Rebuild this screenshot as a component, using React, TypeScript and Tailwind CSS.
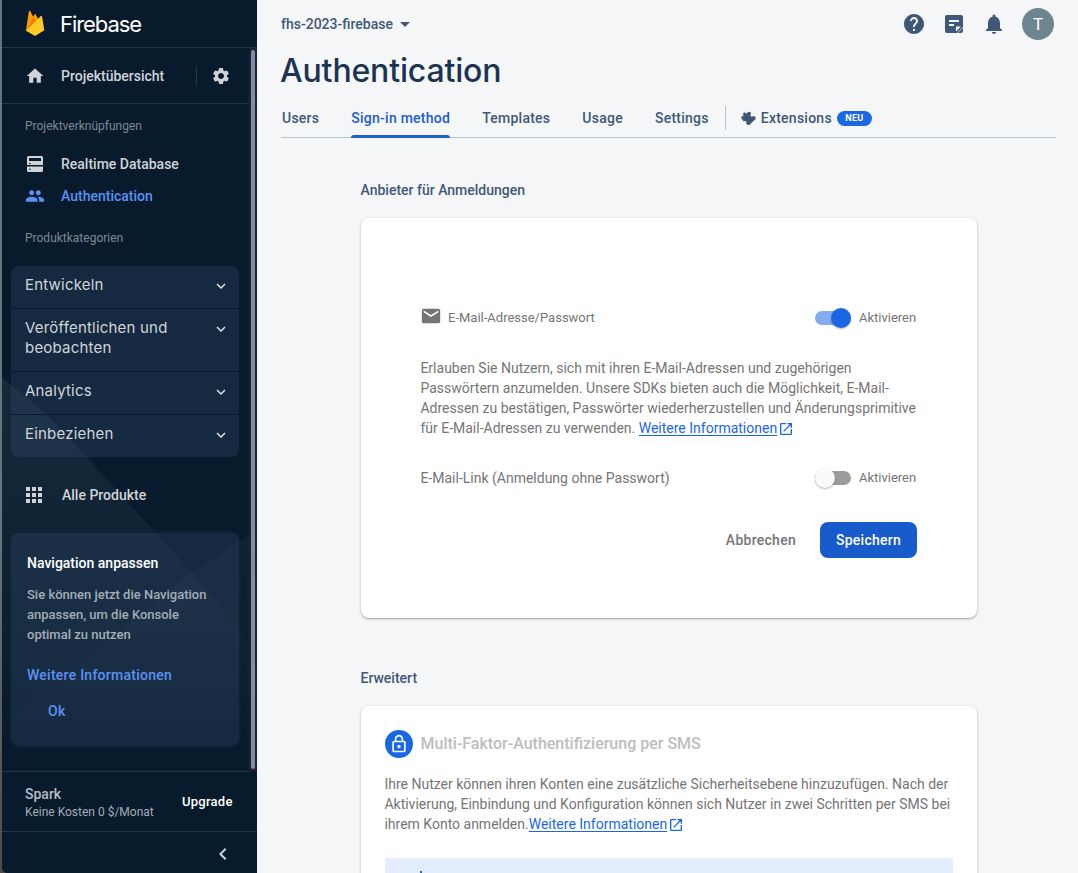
import React from "react";
import {
  MdHome,
  MdSettings,
  MdPeople,
  MdApps,
  MdExpandMore,
  MdHelp,
  MdNotifications,
  MdEmail,
  MdOpenInNew,
  MdChevronLeft,
  MdArrowDropDown,
  MdLockOutline,
} from "react-icons/md";

const roboto = "font-[Roboto,sans-serif]";
const display = "font-[Inter,sans-serif]";

function FirebaseLogo() {
  return (
    <svg width="20" height="27" viewBox="0 0 20 27">
      <path d="M1 20.5 3.9 1.2c.1-.6.9-.8 1.200-.2l3.100 5.800 1.300-2.400c.3-.5.9-.5 1.200 0L19 20.500z" fill="#ffa000" />
      <path d="M12 12 8.200 6.800 1 20.500z" fill="#f57c00" />
      <path d="m19.300 20.300-2.300-14c-.1-.5-.7-.7-1.100-.3L.9 20.700l8.300 4.900c.5.3 1.200.3 1.700 0z" fill="#ffca28" />
    </svg>
  );
}

function DatabaseIcon() {
  return (
    <svg width="16" height="16" viewBox="0 0 16 16" fill="#d0d4d8">
      <path fillRule="evenodd" d="M1.500 0h13A1.500 1.500 0 0 1 16 1.500V9H0V1.500A1.500 1.500 0 0 1 1.500 0zM2 2v3h12V2zm1 4.800a.8.8 0 1 0 0 1.600.8.8 0 0 0 0-1.600z" />
      <path fillRule="evenodd" d="M0 10.500h16v4a1.500 1.500 0 0 1-1.500 1.500h-13A1.500 1.500 0 0 1 0 14.500zm3 2a.8.8 0 1 0 0 1.600.8.8 0 0 0 0-1.600z" />
    </svg>
  );
}

function NotesIcon() {
  return (
    <svg width="18" height="18" viewBox="0 0 18 18">
      <path d="M2 0h14a2 2 0 0 1 2 2v10l-6 6H2a2 2 0 0 1-2-2V2a2 2 0 0 1 2-2z" fill="#3f5878" />
      <path d="M4 5h10v2H4zM4 9h5v2H4zM11 16.500v-5h5z" fill="#f5f6f8" />
      <path d="M18 12.800V16a2 2 0 0 1-2 2h-3.200z" fill="#3f5878" />
    </svg>
  );
}

function ExtensionIcon() {
  return (
    <svg width="15" height="15" viewBox="0 0 15 15" fill="#3f5878">
      <path d="M2.200 3.600C1.700 1.900 3.400.8 4.600 1.900L5.500 2.700 6.700 1.300C8-.1 10.200.9 9.900 2.600L9.600 3.700C9 5.300 10.700 6.500 12 5.300L12.900 4.700 14.600 6.500V7.900L8.600 13.700C8 14.200 7.100 14.200 6.500 13.700L4.700 12 5.300 11.300C5.600 10.700 5.200 10 4.500 10.100 3 10.400 2.200 10.100 1.700 9 1.500 8.500 1 8.300.7 7.900.1 7.200.1 6.200.7 5.600L2.400 5z" />
    </svg>
  );
}

function SidebarBackdrop() {
  return (
    <svg className="absolute left-0 top-0" width="247" height="771" viewBox="0 0 247 771">
      <defs>
        <linearGradient id="ridgeLeft" x1="0" y1="377" x2="0" y2="745" gradientUnits="userSpaceOnUse">
          <stop offset="0" stopColor="#8fa0b8" stopOpacity=".11" />
          <stop offset="1" stopColor="#8fa0b8" stopOpacity="0" />
        </linearGradient>
        <linearGradient id="ridgeRight" x1="0" y1="535" x2="0" y2="745" gradientUnits="userSpaceOnUse">
          <stop offset="0" stopColor="#8fa0b8" stopOpacity=".06" />
          <stop offset="1" stopColor="#8fa0b8" stopOpacity="0" />
        </linearGradient>
      </defs>
      <path d="M0 378 Q45 412 82 454 L190 573 L247 642 V745 H0z" fill="url(#ridgeLeft)" />
      <path d="M247 535 L190 573 L0 725 V745 H247z" fill="url(#ridgeRight)" />
    </svg>
  );
}

function Category({ label, last }: { label: string; last?: boolean }) {
  return (
    <div className={`flex items-start justify-between pl-3.5 pr-[9px] pt-[9px] pb-[13px] ${last ? "" : "border-b border-[#081b2c]"}`}>
      <span className={`w-[165px] text-[15px] leading-5 tracking-[0.2px] text-[#d0d5da] ${display}`}>{label}</span>
      <MdExpandMore size={18} className="mt-[2px] text-[#e0e3e6]" />
    </div>
  );
}

function Sidebar() {
  return (
    <aside className="flex w-[257px] shrink-0 bg-linear-to-b from-[#66757a] from-60% to-[#554a42] pl-0.5">
      <div className="relative flex w-full flex-col overflow-hidden rounded-bl-[5px] bg-[#081b2c]">
        <SidebarBackdrop />
        <header className="relative flex h-12 shrink-0 items-start border-b border-[#223746] pl-[23px]">
          <div className="mt-[10px]"><FirebaseLogo /></div>
          <span className={`ml-[15px] mt-[9px] text-[22px] leading-[30px] tracking-[-1.05px] text-white ${display}`}>Firebase</span>
        </header>
        <div className="relative flex min-h-0 flex-1">
          <div className="flex w-[247px] flex-col">
            <div className="flex h-14 items-center border-b border-[#223746]">
              <MdHome size={20} className="ml-[23px] text-[#d0d4d8]" />
              <span className="ml-4 w-[135px] text-sm font-medium text-[#d0d4d8]">Projektübersicht</span>
              <div className="h-5 w-px bg-[#223746]" />
              <MdSettings size={20} className="ml-[14px] text-[#d0d4d8]" />
            </div>
            <div className="mt-[14px] pl-[23px] text-xs leading-4 text-[#7d8993]">Projektverknüpfungen</div>
            <nav className="mt-[14px]">
              <a className="flex h-8 items-center pl-[25px] text-sm font-medium text-[#d0d4d8]">
                <DatabaseIcon />
                <span className="ml-[18px]">Realtime Database</span>
              </a>
              <a className="flex h-8 items-center pl-[23px] text-sm font-medium text-[#5b91f3]">
                <MdPeople size={20} />
                <span className="ml-4">Authentication</span>
              </a>
            </nav>
            <div className="mt-[18px] pl-[23px] text-xs leading-4 text-[#7d8993]">Produktkategorien</div>
            <div className="ml-[9px] mt-5 w-[228px] rounded-lg bg-[#3b567a]/25">
              <Category label="Entwickeln" />
              <Category label="Veröffentlichen und beobachten" />
              <Category label="Analytics" />
              <Category label="Einbeziehen" last />
            </div>
            <div className="mt-[26px] flex h-6 items-center pl-5">
              <MdApps size={24} className="text-[#d0d4d8]" />
              <span className="ml-4 text-sm font-medium text-[#d0d4d8]">Alle Produkte</span>
            </div>
            <section className="ml-[9px] mt-[26px] h-[213px] w-[228px] rounded-lg bg-[#3b567a]/25 pl-4 pt-5 shadow-[0_0_4px_#14283d]">
              <h3 className="text-sm font-medium leading-5 text-white">Navigation anpassen</h3>
              <p className="mt-3 w-[200px] text-[13px] font-medium leading-5 text-[#a4adb6]">
                Sie können jetzt die Navigation<br />anpassen, um die Konsole<br />optimal zu nutzen
              </p>
              <div className="mt-5 text-sm font-medium leading-5 tracking-[0.25px] text-[#5b91f3]">Weitere Informationen</div>
              <div className="mt-4 pl-[21px] text-sm font-medium leading-5 tracking-[0.25px] text-[#5b91f3]">Ok</div>
            </section>
            <div className="mt-auto flex h-[60px] shrink-0 items-center border-t border-[#223746] pl-[23px]">
              <div className="w-[157px] pt-[3px]">
                <div className="text-sm font-medium leading-[18px] text-[#b5bcc3]">Spark</div>
                <div className="text-xs leading-[18px] text-[#a4adb6]">Keine Kosten 0 $/Monat</div>
              </div>
              <span className="pt-px text-[13px] font-medium tracking-[0.25px] text-white">Upgrade</span>
            </div>
          </div>
          <div className="flex h-[723px] w-2 justify-center bg-[#20232f] py-0.5">
            <div className="w-1 rounded-full bg-[#7d8eab]" />
          </div>
        </div>
        <div className="relative flex h-[42px] shrink-0 items-center justify-end border-t border-[#223746] pr-[22px]">
          <MdChevronLeft size={24} className="mt-0.5 text-[#d0d4d8]" />
        </div>
      </div>
    </aside>
  );
}

function Tab({ label, active }: { label: string; active?: boolean }) {
  return (
    <div className={`flex h-9 items-start text-sm font-medium leading-5 tracking-[0.25px] ${active ? "relative text-[#1a5dcd]" : "text-[#3f5878]"}`}>
      <span>{label}</span>
      {active && <span className="absolute left-0 bottom-[6px] h-[3px] w-[99px] rounded-t-sm bg-[#1a5dcd]" />}
    </div>
  );
}

function Toggle({ on }: { on?: boolean }) {
  return (
    <div className="flex w-[102px] items-center">
      <div className={`flex h-3.5 w-9 items-center rounded-full ${on ? "justify-end bg-[#83acf1]" : "justify-start bg-[#9b9b9b]"}`}>
        <div className={`size-5 shrink-0 rounded-full shadow-[0_1px_2px_rgba(0,0,0,0.3)] ${on ? "bg-[#1a67e4]" : "bg-[#fafafa]"}`} />
      </div>
      <span className="ml-2 text-[13px] text-[#757575]">Aktivieren</span>
    </div>
  );
}

function MoreLink() {
  return (
    <>
      <span className="text-[#1a67e4] underline underline-offset-2">Weitere Informationen</span>
      <MdOpenInNew size={16} className="-mt-px ml-px inline align-middle text-[#1a67e4]" />
    </>
  );
}

function Main() {
  const card = "w-[616px] shrink-0 rounded-lg bg-white shadow-[0_1px_3px_rgba(0,0,0,0.25),0_1px_1px_rgba(0,0,0,0.14)]";
  return (
    <main className="flex min-w-0 flex-1 flex-col pl-6">
      <div className="flex h-12 shrink-0 items-center pr-6">
        <span className="text-sm font-medium text-[#3f5878]">fhs-2023-firebase</span>
        <MdArrowDropDown size={24} className="text-[#3f5878]" />
        <div className="ml-auto flex items-center text-[#3f5878]">
          <MdHelp size={24} />
          <div className="ml-[19px]"><NotesIcon /></div>
          <MdNotifications size={24} className="ml-[19px]" />
          <div className="ml-4 flex size-8 items-center justify-center rounded-full bg-[#6c858f] pt-0.5 text-[17px] text-white">T</div>
        </div>
      </div>
      <h1 className={`-ml-px h-[46px] shrink-0 text-[32px] font-[450] leading-[46px] tracking-[-0.16px] text-[#1c3451] ${display}`}>Authentication</h1>
      <div className="mr-[22px] flex h-11 shrink-0 items-start border-b border-[#b9c5d1] pl-px pt-[14px]">
        <Tab label="Users" />
        <div className="ml-8"><Tab label="Sign-in method" active /></div>
        <div className="ml-8"><Tab label="Templates" /></div>
        <div className="ml-8"><Tab label="Usage" /></div>
        <div className="ml-8"><Tab label="Settings" /></div>
        <div className="-mt-0.5 ml-4 h-6 w-px bg-[#b9c5d1]" />
        <div className="ml-[15px] flex h-5 items-center">
          <ExtensionIcon />
          <span className="ml-[5px] text-sm font-medium tracking-[0.25px] text-[#3f5878]">Extensions</span>
          <span className="ml-[5px] flex h-[15px] w-[35px] items-center justify-center rounded-full bg-[#1a67e4] pt-px text-[9px] font-bold tracking-[0.3px] text-white">NEU</span>
        </div>
      </div>
      <div className="ml-20 flex flex-col">
        <h2 className="-ml-[0.5px] mt-[42px] text-sm font-medium leading-5 text-[#3f5878]">Anbieter für Anmeldungen</h2>
        <section className={`mt-[18px] h-[400px] px-[60px] pt-[90px] ${card}`}>
          <div className="flex h-5 items-center">
            <MdEmail size={22} className="-ml-px -mt-1 text-[#757575]" />
            <span className="ml-1.5 text-[13px] text-[#757575]">E-Mail-Adresse/Passwort</span>
            <div className="ml-auto"><Toggle on /></div>
          </div>
          <p className="-ml-[0.6px] mt-[30px] whitespace-nowrap text-sm leading-5 text-[#757575]">
            Erlauben Sie Nutzern, sich mit ihren E-Mail-Adressen und zugehörigen<br />
            Passwörtern anzumelden. Unsere SDKs bieten auch die Möglichkeit, E-Mail-<br />
            Adressen zu bestätigen, Passwörter wiederherzustellen und Änderungsprimitive<br />
            für E-Mail-Adressen zu verwenden. <MoreLink />
          </p>
          <div className="mt-[30px] flex h-5 items-center">
            <span className="-ml-[0.6px] text-sm text-[#757575]">E-Mail-Link (Anmeldung ohne Passwort)</span>
            <div className="ml-auto"><Toggle /></div>
          </div>
          <div className="mt-[34px] flex items-center justify-end text-sm font-medium tracking-[0.27px]">
            <span className="mr-6 text-[#757575]">Abbrechen</span>
            <button className="h-9 w-[97px] rounded-lg bg-[#185bcb] text-white">Speichern</button>
          </div>
        </section>
        <h2 className="-ml-[0.5px] mt-[50px] text-sm font-medium leading-5 text-[#3f5878]">Erweitert</h2>
        <section className={`mt-[18px] h-[300px] px-6 pt-6 ${card}`}>
          <div className="flex h-7 items-center">
            <div className="flex size-7 items-center justify-center rounded-full bg-[#1a67e4]">
              <MdLockOutline size={20} className="-ml-px text-white" />
            </div>
            <h3 className="ml-[7.500px] text-base font-medium text-[#bdbdbd]">Multi-Faktor-Authentifizierung per SMS</h3>
          </div>
          <p className="-ml-[0.6px] mt-4 whitespace-nowrap text-sm leading-5 text-[#757575]">
            Ihre Nutzer können ihren Konten eine zusätzliche Sicherheitsebene hinzuzufügen. Nach der<br />
            Aktivierung, Einbindung und Konfiguration können sich Nutzer in zwei Schritten per SMS bei<br />
            ihrem Konto anmelden.<MoreLink />
          </p>
          <div className="mt-6 h-20 bg-[#e3edfe] pl-[35px] pt-[13px]">
            <div className="h-3 w-0.5 bg-[#1a67e4]" />
          </div>
        </section>
      </div>
    </main>
  );
}

export default function App() {
  return (
    <div className={`flex h-[873px] w-[1078px] overflow-hidden bg-[#f5f6f8] ${roboto}`}>
      <Sidebar />
      <Main />
    </div>
  );
}
